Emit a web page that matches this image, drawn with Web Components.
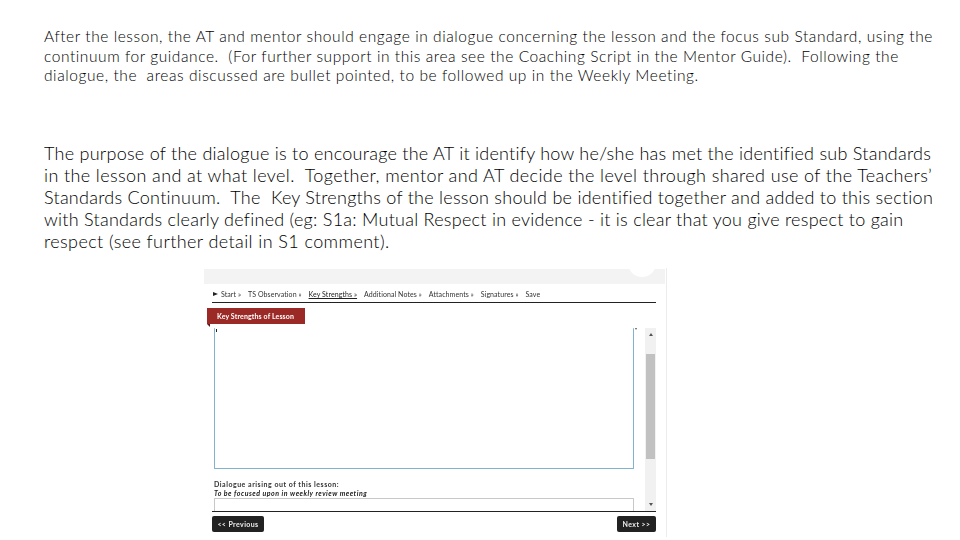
<!DOCTYPE html>
<html>
<head>
<meta charset="utf-8">
<title>Dialogue</title>
<style>
  html, body { margin: 0; padding: 0; background: #fff; }
  body { width: 960px; height: 540px; overflow: hidden; font-family: Lato, "Liberation Sans", sans-serif; }
</style>
</head>
<body>
<slide-page>
  <note-text size="small">
    <span>After the lesson, the AT and mentor should engage in dialogue concerning the lesson and the focus sub Standard, using the</span>
    <span>continuum for guidance.  (For further support in this area see the Coaching Script in the Mentor Guide).  Following the</span>
    <span>dialogue, the  areas discussed are bullet pointed, to be followed up in the Weekly Meeting.</span>
  </note-text>
  <note-text size="large">
    <span>The purpose of the dialogue is to encourage the AT it identify how he/she has met the identified sub Standards</span>
    <span style="letter-spacing:.39px">in the lesson and at what level.  Together, mentor and AT decide the level through shared use of the Teachers’</span>
    <span>Standards Continuum.  The  Key Strengths of the lesson should be identified together and added to this section</span>
    <span>with Standards clearly defined (eg: S1a: Mutual Respect in evidence - it is clear that you give respect to gain</span>
    <span style="letter-spacing:.4px">respect (see further detail in S1 comment).</span>
  </note-text>
  <form-shot></form-shot>
</slide-page>

<template id="slide-page-tpl">
  <style>
    :host { display: block; padding: 27px 0 0 44px; }
    ::slotted(note-text[size="large"]) { margin-top: 56px; }
    ::slotted(form-shot) { margin: 16px 0 0 160px; }
  </style>
  <slot></slot>
</template>

<template id="note-text-tpl">
  <style>
    :host { display: block; color: #000; font-weight: 300; }
    :host([size="small"]) { font-size: 15.5px; line-height: 19.6px; letter-spacing: .575px; }
    :host([size="large"]) { font-size: 18px; line-height: 22px; letter-spacing: .26px; }
    ::slotted(span) { display: block; white-space: pre; }
  </style>
  <slot></slot>
</template>

<template id="form-shot-tpl">
  <style>
    :host { display: block; width: 463px; height: 269px; position: relative; overflow: hidden; background: #fff; font-family: Lato, "Liberation Sans", sans-serif; color: #333; }
    .wrap { box-sizing: border-box; height: 269px; padding: 1px 1px 0 0; border-right: 1px solid #ececec; display: flex; flex-direction: column; filter: blur(.35px); }
    .topbar { height: 15px; background: #f3f3f3; flex: none; }
    .circle { position: absolute; left: 424px; top: -19px; width: 28px; height: 28px; border-radius: 50%; background: #fff; }
    .body { padding: 0 9px 0 8px; flex: 1; display: flex; flex-direction: column; }
    nav { height: 19px; flex: none; padding: 2px 0 0 1px; box-sizing: border-box; border-bottom: 1px solid #222; display: flex; align-items: center; gap: 7px; font-size: 7px; letter-spacing: .08px; white-space: nowrap; }
    nav .play { width: 0; height: 0; border-left: 5px solid #222; border-top: 2.5px solid transparent; border-bottom: 2.5px solid transparent; margin-right: -4px; }
    nav .on { text-decoration: underline; color: #222; }
    .tab { align-self: flex-start; margin: 5px 0 0 -5px; width: 98px; height: 16px; box-sizing: border-box; background: #9b2a26; color: #fff; font-size: 7px; font-weight: 700; letter-spacing: .12px; line-height: 16px; padding-left: 10px; position: relative; flex: none; }
    .tab::after { content: ""; position: absolute; left: 0; top: 16px; border-top: 3px solid #5b1614; border-left: 3px solid transparent; }
    .scrollarea { display: flex; gap: 11px; margin-top: 4px; height: 183px; flex: none; }
    .fields { flex: 1; min-width: 0; padding-left: 2px; display: flex; flex-direction: column; position: relative; }
    .caret { position: absolute; left: 4px; top: 1px; width: 1px; height: 3px; background: #222; }
    .grip { position: absolute; right: -3px; top: 0; border-top: 2px solid #555; border-left: 1.5px solid transparent; border-right: 1.5px solid transparent; }
    .box { box-sizing: border-box; height: 141px; flex: none; border: 1px solid #7fb4cc; border-top: 0; border-radius: 1px; }
    .label { margin-top: 11px; font-size: 7px; font-weight: 700; line-height: 8px; letter-spacing: .52px; color: #333; white-space: nowrap; }
    .hint { font-size: 7px; font-weight: 700; font-style: italic; line-height: 10px; letter-spacing: .5px; color: #222; white-space: nowrap; }
    .box2 { box-sizing: border-box; flex: 1; border: 1px solid #c8c8c8; border-bottom: 0; border-radius: 1px 1px 0 0; }
    .scroll { width: 11px; flex: none; background: #f1f1f1; display: flex; flex-direction: column; align-items: center; justify-content: space-between; }
    .up, .down { width: 0; height: 0; border-left: 2.5px solid transparent; border-right: 2.5px solid transparent; margin: 5px 0; }
    .up { border-bottom: 3px solid #555; }
    .down { border-top: 3px solid #555; }
    .thumb { width: 9px; height: 105px; background: #c1c1c1; margin-top: 13px; margin-bottom: 39px; }
    .rule { height: 1px; background: #222; flex: none; }
    .buttons { display: flex; justify-content: space-between; margin-top: 4px; }
    .btn { background: #222; color: #eee; border-radius: 2px; height: 16px; line-height: 16px; font-size: 7px; font-weight: 700; letter-spacing: .4px; text-align: center; white-space: nowrap; }
    .prev { width: 52px; }
    .next { width: 39px; }
  </style>
  <div class="wrap">
    <div class="topbar"></div>
    <div class="body">
      <nav>
        <span class="play"></span><span>Start »</span><span>TS Observation »</span><span class="on">Key Strengths »</span><span>Additional Notes »</span><span>Attachments »</span><span>Signatures »</span><span>Save</span>
      </nav>
      <div class="tab">Key Strengths of Lesson</div>
      <div class="scrollarea">
        <div class="fields">
          <span class="caret"></span>
          <span class="grip"></span>
          <div class="box"></div>
          <div class="label">Dialogue arising out of this lesson:</div>
          <div class="hint">To be focused upon in weekly review meeting</div>
          <div class="box2"></div>
        </div>
        <div class="scroll">
          <span class="up"></span>
          <span class="thumb"></span>
          <span class="down"></span>
        </div>
      </div>
      <div class="rule"></div>
      <div class="buttons">
        <div class="btn prev">&lt;&lt; Previous</div>
        <div class="btn next">Next &gt;&gt;</div>
      </div>
    </div>
  </div>
  <div class="circle"></div>
</template>

<script>
  function define(name, tplId) {
    customElements.define(name, class extends HTMLElement {
      constructor() {
        super();
        var root = this.attachShadow({mode: 'open'});
        root.appendChild(document.importNode(document.getElementById(tplId).content, true));
      }
    });
  }
  define('slide-page', 'slide-page-tpl');
  define('note-text', 'note-text-tpl');
  define('form-shot', 'form-shot-tpl');
</script>
</body>
</html>
